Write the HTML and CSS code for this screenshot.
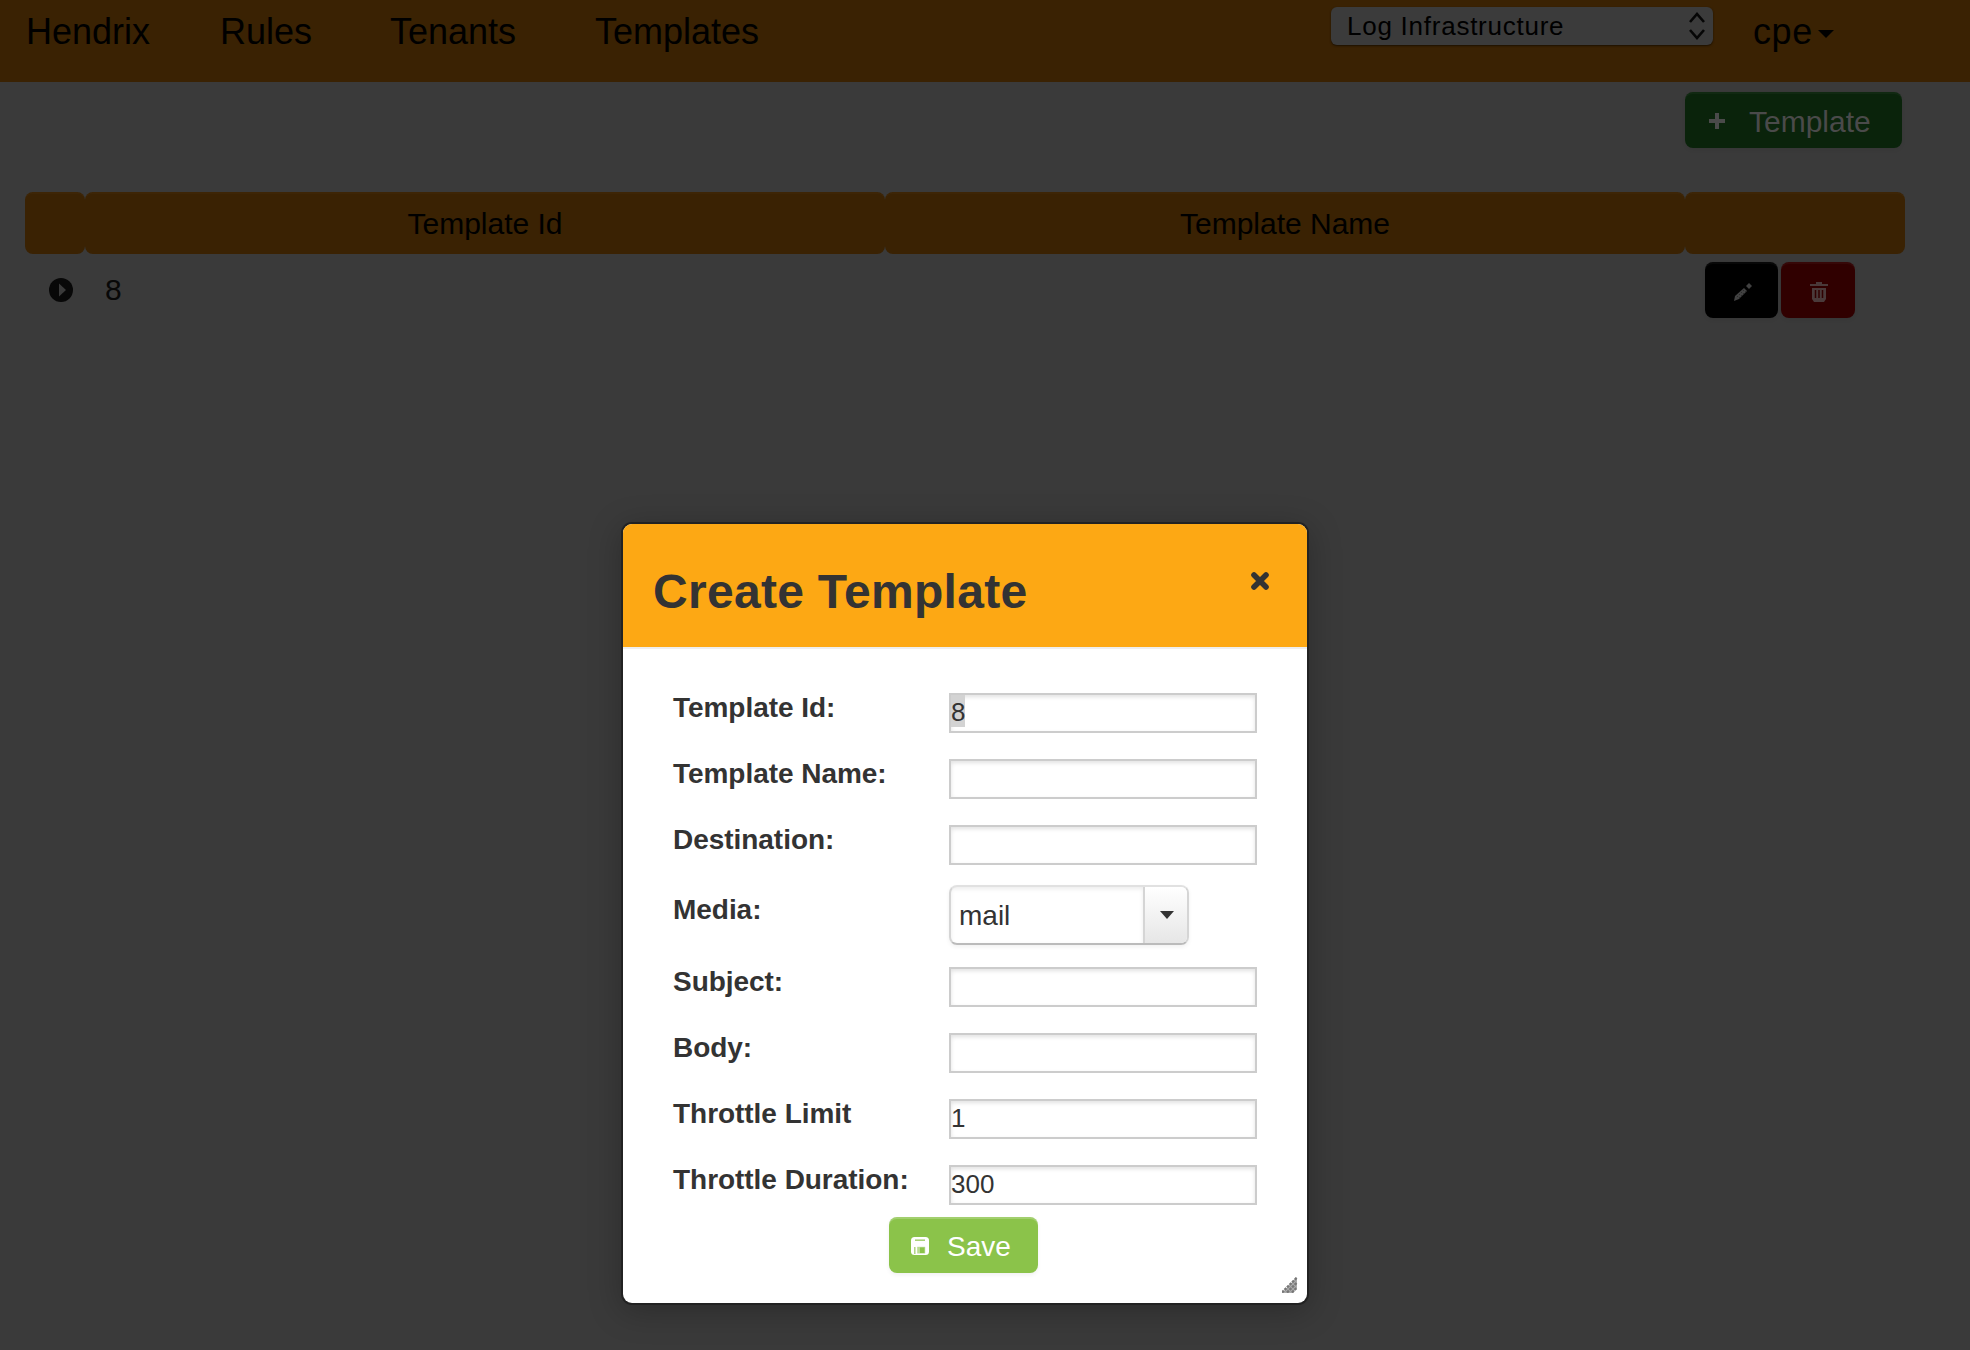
FILE: index.html
```html
<!DOCTYPE html>
<html lang="en">
<head>
<meta charset="utf-8">
<title>Hendrix</title>
<link rel="stylesheet" href="styles.css">
</head>
<body>
<nav class="navbar">
  <a class="brand">Hendrix</a>
  <a class="rules">Rules</a>
  <a class="tenants">Tenants</a>
  <a class="templates">Templates</a>
  <div class="tenant-select"><span>Log Infrastructure</span>
    <svg width="16" height="30" viewBox="0 0 16 30" fill="none" stroke="#060606" stroke-width="2.6"><path d="M1 11 8 3l7 8M1 19l7 8 7-8"/></svg>
  </div>
  <a class="user">cpe<svg width="16" height="8" viewBox="0 0 16 8"><path d="M0 0h16L8 8z"/></svg></a>
</nav>
<main>
  <div class="toolbar">
    <div class="btn add">
      <svg width="18" height="18" viewBox="0 0 18 18"><path d="M7 1h4v6h6v4h-6v6H7v-6H1V7h6z" fill="#4a4a4a"/></svg>
      <span>Template</span>
    </div>
  </div>
  <div class="grid head"><div></div><div>Template Id</div><div>Template Name</div><div></div></div>
  <div class="grid row">
    <div class="expand"><svg width="24" height="24" viewBox="0 0 24 24"><circle cx="12" cy="12" r="12" fill="#080808"/><path d="M10 5.5v13l7-6.500z" fill="#3a3a3a"/></svg></div>
    <div class="id">8</div>
    <div></div>
    <div class="actions">
      <div class="btn edit"><svg width="20" height="20" viewBox="0 0 20 20" fill="#414141"><path d="m1 19 1-5L11 6l3 3-8 8z"/><path d="m13 4 3-3 3 3-3 3z"/><path d="m4 15 7-7M6 16l7-7" stroke="#222" stroke-dasharray="1 2"/></svg></div>
      <div class="btn remove"><svg width="18" height="20" viewBox="0 0 18 20"><path d="M6 0h6v2h6v2H0V2h6zM2 6h14v11l-2 3H4l-2-3z" fill="#4a3a3a"/><path d="M5.500 8v8M9 8v8M12.500 8v8" stroke="#300000" stroke-width="1.500"/></svg></div>
    </div>
  </div>
</main>
<div class="overlay">
  <section class="modal">
    <header><h1>Create Template</h1>
      <svg width="20" height="20" viewBox="0 0 20 20"><path d="m4 4 12 12m0-12-12 12" stroke="#333" stroke-width="5.600" stroke-linecap="round"/></svg>
    </header>
    <form>
      <div class="field"><label>Template Id:</label><div class="input"><mark>8</mark></div></div>
      <div class="field"><label>Template Name:</label><div class="input"></div></div>
      <div class="field"><label>Destination:</label><div class="input"></div></div>
      <div class="field media"><label>Media:</label>
        <div class="dropdown"><span>mail</span><i><svg width="14" height="8" viewBox="0 0 14 8"><path d="M0 0h14L7 8z" fill="#333"/></svg></i></div></div>
      <div class="field"><label>Subject:</label><div class="input"></div></div>
      <div class="field"><label>Body:</label><div class="input"></div></div>
      <div class="field"><label>Throttle Limit</label><div class="input">1</div></div>
      <div class="field"><label>Throttle Duration:</label><div class="input">300</div></div>
      <div class="btn save">
        <svg width="18" height="18" viewBox="0 0 18 18"><rect width="18" height="18" rx="3.500" fill="#fff"/><path d="M4 3.200h10" stroke="#a9d279" stroke-width="1.600"/><path d="M3.800 10v7" stroke="#a9d279" stroke-width="1.400"/><path d="M6.200 9.800h8v6.700h-8z" fill="#b9dc93"/><path d="M9 10.500h4.500v5.500H9z" fill="#8bc34a"/></svg>
        <span>Save</span>
      </div>
    </form>
    <svg class="grip" width="16" height="16" viewBox="0 0 16 16"><path d="M0 16 15 0v11l-4.500 5z" fill="#aaa"/><path d="M0 15.500 15 .5M5 15.500l10-10M10 15.500l5-5" stroke="#777" stroke-width="2.400" stroke-dasharray="2.600 1"/></svg>
  </section>
</div>
</body>
</html>
```
FILE: styles.css
```css
* { box-sizing: border-box; }
body { margin: 0; height: 1350px; overflow: hidden; background: #3a3a3a; color: #000; font-family: "Liberation Sans", Arial, sans-serif; }
svg { display: block; flex: none; }
.navbar { height: 82px; background: #3a2203; display: flex; align-items: flex-start; padding-left: 26px; font-size: 36px; line-height: 40px; }
.navbar a { padding-top: 12px; white-space: nowrap; }
.brand { width: 194px; }
.rules { width: 170px; }
.tenants { width: 205px; }
.templates { width: 736px; }
.tenant-select { width: 382px; height: 38px; margin-top: 7px; padding: 0 8px 0 16px; border-radius: 6px; background: #3b3b3b; box-shadow: 0 1px 2px #1c1000; display: flex; align-items: center; justify-content: space-between; font-size: 26px; letter-spacing: .75px; }
.user { display: flex; align-items: center; gap: 5px; margin-left: 40px; letter-spacing: .6px; }
.user svg { margin-top: 4px; }
.toolbar { height: 110px; padding: 10px 68px 0 0; display: flex; justify-content: flex-end; }
.btn { height: 56px; border-radius: 8px; display: flex; align-items: center; justify-content: center; box-shadow: inset 0 2px rgba(255,255,255,.03), 0 2px 4px rgba(0,0,0,.05); }
.btn svg { margin-top: 2px; }
.btn span { margin-top: 3px; }
.add { width: 217px; background: #0a230b; color: #4a4a4a; font-size: 30px; justify-content: flex-start; padding-left: 23px; gap: 23px; }
.grid { display: grid; grid-template-columns: 60px 800px 800px 220px; margin-left: 25px; }
.head { height: 62px; font-size: 30px; line-height: 64px; text-align: center; }
.head div { height: 62px; background: #3a2203; border-radius: 8px; box-shadow: inset 0 2px rgba(255,255,255,.015); }
.row { height: 76px; align-items: start; font-size: 30px; }
.expand { padding: 24px 0 0 24px; }
.id { padding: 18px 0 0 20px; line-height: 36px; color: #080808; }
.actions { display: flex; gap: 3px; padding: 8px 0 0 20px; }
.actions svg { margin: 4px 0 0 2px; }
.edit { width: 73px; background: #000; }
.remove { width: 74px; background: #300000; }
.overlay { position: absolute; inset: 0; padding: 524px 0 0 623px; }
.modal { position: relative; width: 684px; height: 779px; background: #fff; color: #333; border-radius: 9px; overflow: hidden; box-shadow: 0 0 0 2px #222, 0 6px 32px 2px rgba(0,0,0,.25); }
.modal header { height: 125px; background: #fda814; border-bottom: 2px solid #eee; display: flex; justify-content: space-between; padding: 40px 37px 0 30px; }
h1 { margin: 0; font-size: 48px; line-height: 56px; letter-spacing: .3px; white-space: nowrap; }
.modal header svg { margin-top: 7px; }
form { padding: 44px 50px 0; }
.field { display: grid; grid-template-columns: 276px 308px; height: 66px; }
.field label { font-size: 28px; font-weight: bold; line-height: 32px; letter-spacing: -.04px; margin-top: -1px; white-space: nowrap; }
.input { height: 40px; border: 2px solid #ccc; box-shadow: inset 0 2px 4px rgba(0,0,0,.12); font-size: 26px; line-height: 34px; }
mark { display: inline-block; height: 32px; line-height: 34px; background: #d3d3d3; color: #333; }
.media { height: 76px; }
.field.media label { margin-top: 3px; }
.dropdown { width: 240px; height: 60px; margin-top: -6px; border: 2px solid #d5d5d5; border-top-color: #e1e1e1; border-bottom-color: #bbb; border-radius: 8px; display: flex; overflow: hidden; box-shadow: 0 2px 4px rgba(0,0,0,.06); }
.dropdown span { width: 194px; padding-left: 8px; font-size: 28px; line-height: 58px; border-right: 2px solid #d5d5d5; box-shadow: inset 0 2px 4px rgba(0,0,0,.08); }
.dropdown i { flex: 1; display: flex; align-items: center; justify-content: center; padding-left: 2px; background: linear-gradient(#fff, #e6e6e6); }
.save { width: 149px; margin: -14px 0 0 216px; background: #8bc34a; color: #fff; font-size: 28px; justify-content: flex-start; gap: 18px; padding-left: 22px; box-shadow: inset 0 2px rgba(255,255,255,.2), 0 2px 4px rgba(0,0,0,.06); }
.grip { position: absolute; right: 9px; bottom: 10px; }
```
